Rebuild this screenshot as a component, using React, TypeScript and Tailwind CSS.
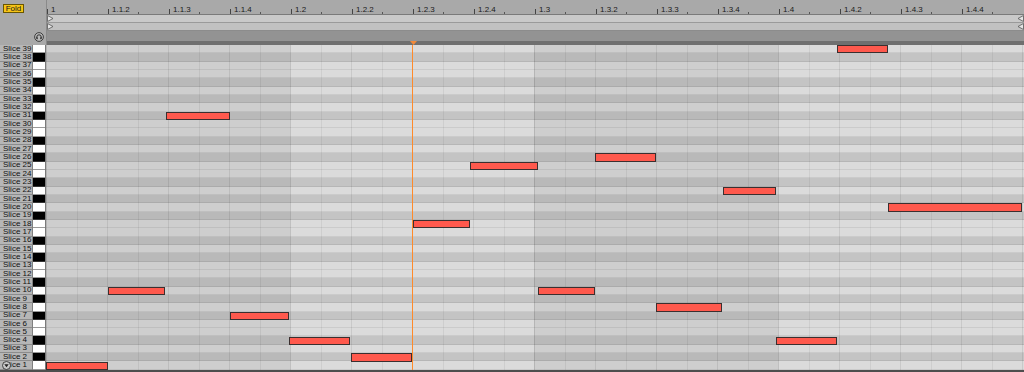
import React from "react";

const ROWS = 39;
const ROW_H = 325 / ROWS;
const isBlack = (slice: number) => [1, 3, 6, 8, 10].includes((slice - 1) % 12);

const notes = [
  { s: 1, l: 0, w: 62 },
  { s: 10, l: 62, w: 57 },
  { s: 31, l: 120, w: 64 },
  { s: 7, l: 184, w: 59 },
  { s: 4, l: 243, w: 61 },
  { s: 2, l: 305, w: 61 },
  { s: 18, l: 367, w: 57 },
  { s: 25, l: 424, w: 68 },
  { s: 10, l: 492, w: 57 },
  { s: 26, l: 549, w: 61 },
  { s: 8, l: 610, w: 66 },
  { s: 22, l: 677, w: 53 },
  { s: 4, l: 730, w: 61 },
  { s: 39, l: 791, w: 51 },
  { s: 20, l: 842, w: 134 },
];

const slices = Array.from({ length: ROWS }, (_, i) => ROWS - i);

const label = (i: number) => {
  if (i === 0) return "1";
  const beat = Math.floor(i / 4) + 1;
  const six = (i % 4) + 1;
  return six === 1 ? `1.${beat}` : `1.${beat}.${six}`;
};

function RightTri() {
  return (
    <svg width="7" height="7" viewBox="0 0 7 7" className="block">
      <polygon points="0.5,0.5 6,3.5 0.5,6.5" fill="#e4e4e4" stroke="#555" strokeWidth="0.8" />
    </svg>
  );
}
function LeftTri() {
  return (
    <svg width="7" height="7" viewBox="0 0 7 7" className="block">
      <polygon points="6.5,0.5 1,3.5 6.5,6.5" fill="#e4e4e4" stroke="#555" strokeWidth="0.8" />
    </svg>
  );
}

export default function App() {
  return (
    <div
      className="w-[1024px] h-[372px] overflow-hidden bg-[#a9a9a9] flex flex-col select-none"
      style={{ fontFamily: '"Liberation Sans", Arial, sans-serif' }}
    >
      {/* header */}
      <div className="flex h-[45px] shrink-0">
        <div className="w-[47px] shrink-0 relative border-r border-[#8a8a8a]">
          <div className="absolute left-[3px] top-[4px] w-[21px] h-[9px] bg-[#f6c417] border border-[#6a5600] flex items-center justify-center text-[8px] leading-none text-[#1a1a1a]">
            Fold
          </div>
          <div className="absolute left-[34px] top-[32px]">
            <svg width="10" height="10" viewBox="0 0 10 10" className="block">
              <circle cx="5" cy="5" r="4.4" fill="#b8b8b8" stroke="#333" strokeWidth="0.9" />
              <path d="M2.8 6.2 V5 A2.2 2.2 0 0 1 7.2 5 V6.2" fill="none" stroke="#222" strokeWidth="0.9" />
              <rect x="2.4" y="5.4" width="1.3" height="1.8" fill="#222" />
              <rect x="6.3" y="5.4" width="1.3" height="1.8" fill="#222" />
            </svg>
          </div>
        </div>
        <div className="flex-1 flex flex-col">
          {/* ruler */}
          <div className="h-[15px] flex border-b border-[#7a7a7a] bg-[#a9a9a9]">
            {Array.from({ length: 16 }, (_, i) => (
              <div key={i} className="w-[61px] shrink-0 relative">
                <div className="absolute left-0 top-[9px] w-px h-[5px] bg-[#444]" />
                <div className="absolute left-[30px] top-[12px] w-px h-[2px] bg-[#555]" />
                <div className="absolute left-[4px] top-[6px] text-[8px] leading-none text-[#1a1a1a] whitespace-nowrap">
                  {label(i)}
                </div>
              </div>
            ))}
          </div>
          {/* strips */}
          <div className="h-[8px] bg-[#c9c9c9] border-b border-[#9a9a9a] flex items-center justify-between">
            <RightTri />
            <LeftTri />
          </div>
          <div className="h-[8px] bg-[#c1c1c1] border-b border-[#8c8c8c] flex items-center justify-between">
            <RightTri />
            <LeftTri />
          </div>
          <div className="h-[10px] bg-[#939393]" />
          <div className="h-[4px] bg-[#6f6f6f] relative">
            <div className="absolute left-[363px] top-0">
              <svg width="7" height="4" viewBox="0 0 7 4" className="block">
                <polygon points="0,0 7,0 3.5,4" fill="#f28a3a" />
              </svg>
            </div>
          </div>
        </div>
      </div>

      {/* body */}
      <div className="flex h-[325px] shrink-0">
        {/* labels */}
        <div className="w-[33px] shrink-0 flex flex-col border-r border-[#808080] relative">
          {slices.map((s) => (
            <div
              key={s}
              className="flex-1 min-h-0 bg-[#b6b6b6] border-b border-[#8c8c8c] flex items-center pl-[3px] text-[8px] leading-none text-[#111] whitespace-nowrap overflow-hidden"
            >
              Slice {s}
            </div>
          ))}
          <div className="absolute left-[2px] bottom-[0px]">
            <svg width="9" height="9" viewBox="0 0 9 9" className="block">
              <circle cx="4.5" cy="4.5" r="4" fill="#c8c8c8" stroke="#333" strokeWidth="0.9" />
              <polygon points="2.3,3.2 6.7,3.2 4.5,6.3" fill="#222" />
            </svg>
          </div>
        </div>
        {/* keys */}
        <div className="w-[13px] shrink-0 flex flex-col border-r border-[#7a7a7a]">
          {slices.map((s) => (
            <div
              key={s}
              className={`flex-1 min-h-0 border-b ${isBlack(s) ? "bg-black border-[#333]" : "bg-white border-[#999]"}`}
            />
          ))}
        </div>
        {/* grid */}
        <div className="flex-1 relative overflow-hidden">
          <div className="absolute inset-0 flex">
            {[0, 1, 2, 3].map((b) => (
              <div key={b} className={`w-[244px] shrink-0 flex ${b % 2 === 0 ? "bg-[#cecece]" : "bg-[#dbdbdb]"}`}>
                {Array.from({ length: 8 }, (_, k) => (
                  <div
                    key={k}
                    className={`flex-1 border-l ${k === 0 ? "border-black/[0.12]" : k % 2 === 0 ? "border-black/[0.08]" : "border-black/[0.06]"}`}
                  />
                ))}
              </div>
            ))}
            <div className="flex-1 bg-[#dbdbdb] border-l border-black/[0.08]" />
          </div>
          <div className="absolute inset-0 flex flex-col">
            {slices.map((s) => (
              <div
                key={s}
                className={`flex-1 min-h-0 border-b border-black/[0.07] ${isBlack(s) ? "bg-black/[0.1]" : ""}`}
              />
            ))}
          </div>
          <div className="absolute top-0 bottom-0 left-[366px] w-[1px] bg-[#ff8a2a] z-10" />
          {notes.map((n, i) => (
            <div
              key={i}
              className="absolute bg-[#ff594d] border border-[#3b2f2f] box-border"
              style={{ left: n.l, width: n.w, top: (ROWS - n.s) * ROW_H, height: ROW_H }}
            />
          ))}
        </div>
      </div>
      <div className="h-[2px] bg-[#4e4e4e] shrink-0" />
    </div>
  );
}
